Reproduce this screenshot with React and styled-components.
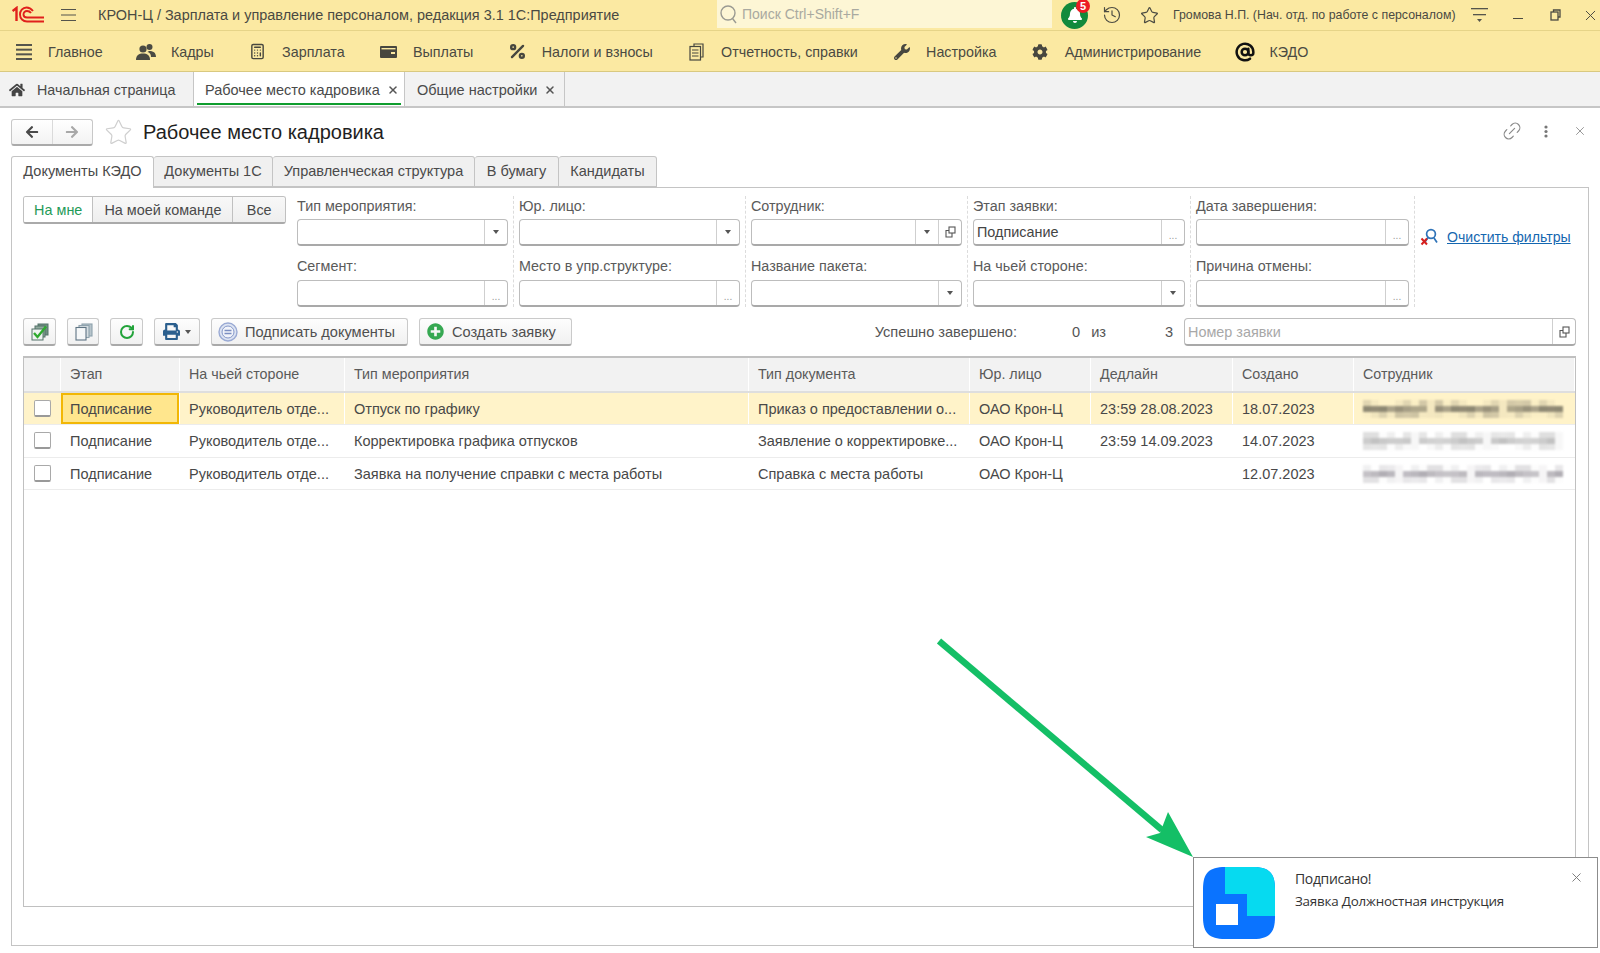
import React from "react";
import styled, { createGlobalStyle } from "styled-components";
import { Calculator, History, Star, Link2, RotateCw, X, AtSign, Percent } from "lucide-react";
import { FaWrench, FaCog, FaBell, FaArrowLeft, FaArrowRight, FaPrint, FaPlusCircle, FaHome } from "react-icons/fa";

const Global = createGlobalStyle`
  html, body { margin: 0; padding: 0; background: #fff; }
  * { box-sizing: border-box; }
  body { font-family: "Liberation Sans", Arial, sans-serif; font-size: 14.4px; color: #444; }
`;

const Screen = styled.div`
  position: relative;
  width: 1600px;
  height: 953px;
  overflow: hidden;
  display: flex;
  flex-direction: column;
  background: #fff;
`;

/* ---------- title bar ---------- */
const TitleBar = styled.header`
  height: 31px;
  flex: none;
  display: flex;
  align-items: center;
  background: #fbe9a2;
  border-bottom: 1px solid #e6d488;
  padding-left: 12px;
  color: #4a4a42;
`;
const Burger = styled.span`
  display: flex;
  margin-left: 16px;
  margin-right: 22px;
`;
const AppTitle = styled.div`
  width: 619px;
  flex: none;
  font-size: 14.45px;
  white-space: nowrap;
`;
const SearchBox = styled.div`
  width: 335px;
  height: 28px;
  flex: none;
  margin-top: -3px;
  display: flex;
  align-items: center;
  gap: 4px;
  padding-left: 2px;
  background: #fdf6d5;
  color: #a9a9a0;
  font-size: 14px;
`;
const BellBadge = styled.div`
  position: relative;
  width: 27px;
  height: 27px;
  flex: none;
  margin-left: 9px;
  border-radius: 50%;
  background: #128a3c;
  color: #fff;
  display: flex;
  align-items: center;
  justify-content: center;
`;
const Badge = styled.span`
  position: absolute;
  top: -3px;
  right: -2px;
  width: 14px;
  height: 14px;
  border-radius: 50%;
  background: #ec1c24;
  color: #fff;
  font-size: 11px;
  font-weight: 700;
  line-height: 14px;
  text-align: center;
`;
const TitleIcon = styled.span`
  display: flex;
  flex: none;
  margin-left: ${(p) => p.$left}px;
  color: #4b4b42;
`;
const UserName = styled.div`
  margin-left: 14px;
  width: 289px;
  flex: none;
  font-size: 12.35px;
  white-space: nowrap;
`;
const MinimizeBar = styled.span`
  display: block;
  width: 10px;
  height: 1.5px;
  margin-top: 7px;
  background: #4b4b42;
`;

/* ---------- section menu ---------- */
const MenuBar = styled.nav`
  height: 41px;
  flex: none;
  display: flex;
  align-items: center;
  gap: 33.3px;
  padding: 1px 0 0 13px;
  background: #fbe9a2;
  border-bottom: 1px solid #d9c980;
`;
const MenuItem = styled.div`
  display: flex;
  align-items: center;
  gap: 14px;
  color: #4a4a42;
  font-size: 14.3px;
  white-space: nowrap;
`;
const MenuIcon = styled.span`
  width: 21px;
  display: flex;
  justify-content: center;
  color: #47473f;
`;

/* ---------- open windows ---------- */
const OpenTabs = styled.div`
  height: 36px;
  flex: none;
  display: flex;
  background: #f2f2f2;
  border-bottom: 2px solid #c6c6c6;
`;
const OpenTab = styled.div`
  position: relative;
  width: ${(p) => p.$width}px;
  display: flex;
  align-items: center;
  gap: ${(p) => p.$gap || 7}px;
  padding: 1px 0 0 ${(p) => p.$pad}px;
  background: ${(p) => (p.$active ? "#fff" : "#f2f2f2")};
  border-right: 1px solid #c6c6c6;
  font-size: ${(p) => p.$size || 14.5}px;
  color: #4a4a4a;
  white-space: nowrap;
  &::after {
    content: "";
    display: ${(p) => (p.$active ? "block" : "none")};
    position: absolute;
    left: 3px;
    right: 3px;
    bottom: 1px;
    height: 2px;
    background: #0f9d2e;
  }
`;

/* ---------- form ---------- */
const Content = styled.main`
  flex: 1;
  min-height: 0;
  display: flex;
  flex-direction: column;
  padding: 0 11px 7px;
`;
const FormHeader = styled.div`
  height: 48px;
  flex: none;
  display: flex;
  align-items: center;
  padding-top: 1px;
`;
const NavGroup = styled.div`
  display: flex;
  width: 82px;
  height: 27px;
  border: 1px solid #c8c8c8;
  border-bottom: 2px solid #aaa;
  border-radius: 3px;
  background: linear-gradient(#fff, #f3f3f3);
`;
const NavButton = styled.span`
  flex: 1;
  display: flex;
  align-items: center;
  justify-content: center;
  color: ${(p) => (p.$muted ? "#a8a8a8" : "#4a4a4a")};
  & + & { border-left: 1px solid #dadada; }
`;
const FavStar = styled.span`
  display: flex;
  margin: 0 10px 0 11px;
  color: #cfcfcf;
`;
const FormTitle = styled.h1`
  flex: 1;
  margin: 0;
  font-size: 20px;
  font-weight: 400;
  color: #1f1f1f;
`;
const HeaderIcons = styled.div`
  display: flex;
  align-items: center;
  gap: 21px;
  color: #8a8a8a;
  padding-right: 2px;
  margin-bottom: 3px;
`;

const PageTabs = styled.div`
  height: 31px;
  flex: none;
  display: flex;
  position: relative;
  z-index: 1;
`;
const PageTab = styled.div`
  width: ${(p) => p.$width}px;
  height: ${(p) => (p.$active ? 32 : 31)}px;
  padding-bottom: ${(p) => (p.$active ? 3 : 2)}px;
  display: flex;
  align-items: center;
  justify-content: center;
  background: ${(p) => (p.$active ? "#fff" : "#f0f0f0")};
  border: 1px solid #c4c4c4;
  border-left-width: ${(p) => (p.$active ? 1 : 0)}px;
  border-bottom-width: ${(p) => (p.$active ? 0 : 1)}px;
  border-radius: 3px 3px 0 0;
  font-size: 14.5px;
  color: #4a4a4a;
  white-space: nowrap;
`;
const Panel = styled.section`
  flex: 1;
  min-height: 0;
  display: flex;
  flex-direction: column;
  border: 1px solid #c4c4c4;
  padding: 8px 12px 38px 11px;
`;

const Filters = styled.div`
  display: flex;
  height: 111px;
  flex: none;
`;
const Segmented = styled.div`
  width: 263px;
  height: 28px;
  flex: none;
  margin-right: 11px;
  display: flex;
  border: 1px solid #c0c0c0;
  border-bottom: 2px solid #aaa;
  border-radius: 3px;
  overflow: hidden;
`;
const Segment = styled.div`
  width: ${(p) => p.$width}px;
  display: flex;
  align-items: center;
  justify-content: center;
  background: ${(p) => (p.$active ? "#fff" : "linear-gradient(#f8f8f8,#eee)")};
  color: ${(p) => (p.$active ? "#1f9a58" : "#4a4a4a")};
  font-size: 14.4px;
  white-space: nowrap;
  & + & { border-left: 1px solid #c0c0c0; }
`;
const FilterColumn = styled.div`
  width: ${(p) => p.$width}px;
  flex: none;
  display: flex;
  flex-direction: column;
  gap: 11px;
  margin-right: 5px;
  padding-right: 5px;
  border-right: 1px dashed #dcdcdc;
  box-sizing: content-box;
`;
const Field = styled.div`
  display: flex;
  flex-direction: column;
`;
const FieldLabel = styled.label`
  height: 23px;
  line-height: ${(p) => (p.$second ? 18 : 20)}px;
  font-size: 14.35px;
  color: #5a5a5a;
  white-space: nowrap;
`;
const Input = styled.div`
  height: 27px;
  display: flex;
  align-items: stretch;
  border: 1px solid #bdbdbd;
  border-bottom: 2px solid #a9a9a9;
  border-radius: 4px;
  background: #fff;
`;
const InputValue = styled.div`
  flex: 1;
  min-width: 0;
  padding-left: 3px;
  display: flex;
  align-items: center;
  font-size: 14.4px;
  color: ${(p) => (p.$placeholder ? "#a8a8a8" : "#444")};
`;
const InputAddon = styled.div`
  width: ${(p) => p.$width || 23}px;
  flex: none;
  display: flex;
  align-items: center;
  justify-content: center;
  border-left: 1px solid #cfcfcf;
  color: #777;
`;
const Caret = styled.span`
  width: 0;
  height: 0;
  border-left: 3px solid transparent;
  border-right: 3px solid transparent;
  border-top: 4px solid #555;
`;
const Dots = styled.span`
  font-size: 10px;
  line-height: 10px;
  color: #999;
  margin-top: 8px;
`;
const ClearFilters = styled.div`
  display: flex;
  align-items: center;
  gap: 8px;
  height: 27px;
  margin-top: 27px;
`;
const ClearLink = styled.a`
  color: #1467b0;
  font-size: 14.1px;
  text-decoration: underline;
  white-space: nowrap;
`;

const Toolbar = styled.div`
  height: 28px;
  margin-top: 11px;
  flex: none;
  display: flex;
  align-items: center;
  gap: 11px;
`;
const ToolButton = styled.div`
  width: ${(p) => p.$width}px;
  height: 28px;
  flex: none;
  display: flex;
  align-items: center;
  justify-content: ${(p) => (p.$pad ? "flex-start" : "center")};
  padding-left: ${(p) => p.$pad || 0}px;
  gap: ${(p) => p.$gap || 6}px;
  border: 1px solid #cacaca;
  border-bottom: 2px solid #a9a9a9;
  border-radius: 3px;
  background: linear-gradient(#fdfdfd, #f1f1f1);
  font-size: 14.6px;
  color: #4f4f4f;
  white-space: nowrap;
`;
const Progress = styled.div`
  margin-left: auto;
  display: flex;
  align-items: center;
  font-size: 14.6px;
  color: #555;
  white-space: nowrap;
`;
const ProgressNumber = styled.span`
  width: ${(p) => p.$width}px;
  text-align: right;
  flex: none;
`;
const NumberInput = styled(Input)`
  width: 392px;
  height: 28px;
  margin-left: 11px;
  flex: none;
`;

const GRID = "37px 119px 165px 404px 221px 121px 142px 121px 1fr";
const Table = styled.div`
  margin-top: 10px;
  flex: 1;
  min-height: 0;
  border: 1px solid #c0c0c0;
  border-top: 2px solid #c0c0c0;
`;
const HeadRow = styled.div`
  display: grid;
  grid-template-columns: ${GRID};
  height: 34.5px;
  background: #f2f2f2;
  border-bottom: 2px solid #dedede;
`;
const HeadCell = styled.div`
  display: flex;
  align-items: center;
  padding-left: 9px;
  border-right: 1px solid #fff;
  font-size: 14.3px;
  color: #5a5a5a;
`;
const Row = styled.div`
  display: grid;
  grid-template-columns: ${GRID};
  height: 32.5px;
  background: ${(p) => (p.$selected ? "#fff3c9" : "#fff")};
  border-bottom: 1px solid #ececec;
`;
const Cell = styled.div`
  display: flex;
  align-items: center;
  padding: 1px 0 0 9px;
  min-width: 0;
  overflow: hidden;
  white-space: nowrap;
  font-size: 14.5px;
  color: #484848;
  border-right: 1px solid ${(p) => (p.$selected ? "#fff" : "transparent")};
  background: ${(p) => (p.$focused ? "#ffe68d" : "transparent")};
  box-shadow: ${(p) => (p.$focused ? "inset 0 0 0 2px #f2b705" : "none")};
`;
const CheckCell = styled.div`
  display: flex;
  align-items: center;
  justify-content: center;
  padding-right: 1px;
`;
const Checkbox = styled.span`
  width: 17px;
  height: 17px;
  border: 1px solid #a9a9a9;
  border-bottom: 2px solid #999;
  border-radius: 2px;
  background: #fff;
`;
const Mosaic = styled.div`
  display: grid;
  grid-template-columns: repeat(25, 8px);
  grid-auto-rows: 6px;
  filter: blur(1px);
`;
const MosaicCell = styled.span``;

/* ---------- notification and arrow ---------- */
const Toast = styled.aside`
  position: absolute;
  left: 1193px;
  top: 857px;
  width: 405px;
  height: 91px;
  display: flex;
  background: #fff;
  border: 1px solid #8c8c8c;
  padding: 9px 0 0 9px;
`;
const ToastBody = styled.div`
  margin-left: 20px;
  padding-top: 2px;
  color: #333;
  font-family: "Open Sans", "Noto Sans", sans-serif;
`;
const ToastTitle = styled.div`
  font-size: 14px;
  line-height: 20px;
  letter-spacing: -0.35px;
`;
const ToastText = styled.div`
  font-size: 13.4px;
  line-height: 18px;
  margin-top: 3px;
  letter-spacing: -0.2px;
`;
const ToastClose = styled.span`
  position: absolute;
  top: 12px;
  right: 13px;
  color: #777;
  display: flex;
`;
const ArrowOverlay = styled.svg`
  position: absolute;
  left: 0;
  top: 0;
  pointer-events: none;
`;

/* ---------- drawings ---------- */
const Logo1C = () => (
  <svg width="33" height="18" viewBox="0 0 33 18" fill="none" stroke="#e0201c" strokeWidth="1.9">
    <path d="M0.5 5 L4.5 2 V15" strokeWidth="2.4" />
    <path d="M21 5 C19 2.5 17 1.5 14.5 1.5 C10.5 1.5 8 5 8 8.5 C8 12.5 11 15.5 15 15.5 H32" />
    <path d="M19 7 C18 5.5 16.5 5 15 5 C13 5 11.5 6.5 11.5 8.5 C11.5 10.5 13 11.5 15 11.5 H32" />
  </svg>
);
const Lines = ({ n = 3, w = 16, h = 13, t = 1, c = "#55554c" }) => (
  <svg width={w} height={h} viewBox={`0 0 ${w} ${h}`}>
    {Array.from({ length: n }).map((_, i) => (
      <rect key={i} x="0" y={(i * (h - t)) / (n - 1)} width={w} height={t} fill={c} />
    ))}
  </svg>
);
const PeopleIcon = () => (
  <svg width="20" height="18" viewBox="0 0 20 18" fill="#4a4a42">
    <circle cx="7" cy="6" r="3.6" />
    <path d="M0 17 C0 12 3 10.5 7 10.5 S14 12 14 17 Z" />
    <circle cx="13.5" cy="4" r="3" />
    <path d="M13 8 C17 8 20 9.5 20 14 H15 C15 11 13.5 9.5 11.5 9 Z" />
  </svg>
);
const WalletIcon = () => (
  <svg width="17" height="12" viewBox="0 0 17 12">
    <rect width="17" height="12" rx="1" fill="#47473f" />
    <rect x="1.5" y="2" width="14" height="1.4" fill="#fbe9a2" />
    <rect x="11" y="6" width="4" height="2" fill="#fbe9a2" />
  </svg>
);
const ReportIcon = () => (
  <svg width="15" height="18" viewBox="0 0 15 18" fill="none" stroke="#47473f" strokeWidth="1.2">
    <path d="M5 3 V1 H14 V14 H12" />
    <rect x="1" y="3.5" width="10.5" height="13.5" />
    <path d="M3 7 H9.5 M3 10 H9.5 M3 13 H9.5" />
  </svg>
);
const SortMenuIcon = () => (
  <svg width="17" height="18" viewBox="0 0 17 18" fill="#55554c">
    <rect y="2" width="17" height="1.3" />
    <rect x="2" y="8" width="13" height="1.3" />
    <path d="M6 13 H11 L8.5 16 Z" />
  </svg>
);
const RestoreIcon = () => (
  <svg width="11" height="12" viewBox="0 0 11 12" fill="none" stroke="#4b4b42" strokeWidth="1.3">
    <path d="M3.5 3 V1 H10 V8 H8" />
    <rect x="1" y="3" width="7" height="8" />
  </svg>
);
const OpenIcon = () => (
  <svg width="11" height="12" viewBox="0 0 11 12" fill="none" stroke="#555" strokeWidth="1.1">
    <rect x="4" y="1" width="6" height="6" />
    <path d="M4 4.5 H1 V11 H7 V7" />
  </svg>
);
const DotsVertical = () => (
  <svg width="4" height="13" viewBox="0 0 4 13" fill="#777">
    <circle cx="2" cy="2" r="1.6" />
    <circle cx="2" cy="6.5" r="1.6" />
    <circle cx="2" cy="11" r="1.6" />
  </svg>
);
const ClearIcon = () => (
  <svg width="19" height="18" viewBox="0 0 19 18" fill="none">
    <circle cx="11" cy="6" r="4.4" stroke="#2f73b8" strokeWidth="1.7" />
    <path d="M8 9.5 L5 14 M14 10 L17 14.5" stroke="#2f73b8" strokeWidth="1.7" />
    <path d="M1.5 10.5 L7 16.5 M7 10.5 L1.5 16.5" stroke="#d6201f" strokeWidth="2" />
  </svg>
);
const CheckStackIcon = () => (
  <svg width="20" height="18" viewBox="0 0 20 18" fill="none">
    <rect x="8" y="1" width="10" height="11" fill="#6f8f80" stroke="#54736a" />
    <rect x="5" y="3" width="10" height="11" fill="#8fa89c" stroke="#54736a" />
    <rect x="2" y="6" width="11" height="11" fill="#eef3f0" stroke="#54736a" />
    <path d="M4 10 L7.5 14 L16 3.5" stroke="#2eaa2e" strokeWidth="2.4" />
  </svg>
);
const StackIcon = () => (
  <svg width="19" height="18" viewBox="0 0 19 18" fill="#f5f7f8" stroke="#8fa2ad" strokeWidth="1.1">
    <rect x="8" y="1" width="10" height="12" fill="#b7c4cb" />
    <rect x="5" y="2.5" width="10" height="12" fill="#d6dee2" />
    <rect x="2" y="4.5" width="10" height="12.5" stroke="#5e7483" />
  </svg>
);
const SignIcon = () => (
  <svg width="20" height="20" viewBox="0 0 20 20" fill="none">
    <circle cx="10" cy="10" r="9" fill="#dde4f2" stroke="#9aaad4" strokeWidth="1.4" />
    <circle cx="10" cy="10" r="6" fill="#f2f4fa" stroke="#8497c9" />
    <path d="M6.5 8.5 H13.5 M6.5 11.5 H13.5" stroke="#7c8fc2" strokeWidth="1.3" />
  </svg>
);
const AppGlyph = () => (
  <svg width="72" height="72" viewBox="0 0 72 72">
    <path d="M22 0 H50 C66 0 72 6 72 22 V50 C72 66 66 72 50 72 H22 C6 72 0 66 0 50 V22 C0 6 6 0 22 0 Z" fill="#0a73ff" />
    <path d="M22 0 H50 C66 0 72 6 72 22 V49 H44 V27 H22 Z" fill="#06daf0" />
    <rect x="13" y="37" width="22" height="21" fill="#fff" />
  </svg>
);

/* ---------- data ---------- */
const menu = [
  [<Lines n={4} w={16} h={16} t={2} />, "Главное"],
  [<PeopleIcon />, "Кадры"],
  [<Calculator size={17} strokeWidth={2} />, "Зарплата"],
  [<WalletIcon />, "Выплаты"],
  [<Percent size={19} strokeWidth={3} />, "Налоги и взносы"],
  [<ReportIcon />, "Отчетность, справки"],
  [<FaWrench size={16} />, "Настройка"],
  [<FaCog size={16} />, "Администрирование"],
  [<AtSign size={20} strokeWidth={3} color="#111" />, "КЭДО"],
];
const filterColumns = [
  [211, { label: "Тип мероприятия:", kind: "select" }, { label: "Сегмент:", kind: "dots" }],
  [221, { label: "Юр. лицо:", kind: "select" }, { label: "Место в упр.структуре:", kind: "dots" }],
  [211, { label: "Сотрудник:", kind: "selectOpen" }, { label: "Название пакета:", kind: "select" }],
  [212, { label: "Этап заявки:", kind: "dots", value: "Подписание" }, { label: "На чьей стороне:", kind: "select" }],
  [213, { label: "Дата завершения:", kind: "dots" }, { label: "Причина отмены:", kind: "dots" }],
];
const columns = ["", "Этап", "На чьей стороне", "Тип мероприятия", "Тип документа", "Юр. лицо", "Дедлайн", "Создано", "Сотрудник"];
const rows = [
  ["Подписание", "Руководитель отде...", "Отпуск по графику", "Приказ о предоставлении о...", "ОАО Крон-Ц", "23:59 28.08.2023", "18.07.2023"],
  ["Подписание", "Руководитель отде...", "Корректировка графика отпусков", "Заявление о корректировке...", "ОАО Крон-Ц", "23:59 14.09.2023", "14.07.2023"],
  ["Подписание", "Руководитель отде...", "Заявка на получение справки с места работы", "Справка с места работы", "ОАО Крон-Ц", "", "12.07.2023"],
];
const mosaicTone = [
  { base: [110, 105, 90], band: 0.8, side: 0.34, seed: 3 },
  { base: [150, 150, 150], band: 0.6, side: 0.3, seed: 5 },
  { base: [135, 130, 140], band: 0.65, side: 0.24, seed: 8 },
];

const Blurred = ({ row }) => {
  const tone = mosaicTone[row];
  const cells = [];
  for (let y = 0; y < 3; y++) {
    for (let x = 0; x < 25; x++) {
      const n = ((x + 1) * (y + 2) * tone.seed + x * x) % 11;
      const gap = (x + row * 2) % 9 === 8;
      const a = gap
        ? 0.08
        : y === 1
          ? tone.band * (0.7 + n * 0.03)
          : tone.side * (n / 10);
      cells.push(
        <MosaicCell
          key={`${x}-${y}`}
          style={{ background: `rgba(${tone.base[0]},${tone.base[1]},${tone.base[2]},${a})` }}
        />
      );
    }
  }
  return <Mosaic>{cells}</Mosaic>;
};

const FilterField = ({ label, kind, value, second }) => (
  <Field>
    <FieldLabel $second={second}>{label}</FieldLabel>
    <Input>
      <InputValue>{value}</InputValue>
      {kind === "selectOpen" ? (
        <>
          <InputAddon><Caret /></InputAddon>
          <InputAddon><OpenIcon /></InputAddon>
        </>
      ) : (
        <InputAddon>{kind === "dots" ? <Dots>...</Dots> : <Caret />}</InputAddon>
      )}
    </Input>
  </Field>
);

export default function App() {
  return (
    <Screen>
      <Global />
      <TitleBar>
        <Logo1C />
        <Burger><Lines n={3} w={15} h={12} /></Burger>
        <AppTitle>КРОН-Ц / Зарплата и управление персоналом, редакция 3.1 1С:Предприятие</AppTitle>
        <SearchBox>
          <svg width="19" height="20" viewBox="0 0 19 20" fill="none" stroke="#9a9a92" strokeWidth="1.4">
            <circle cx="9" cy="9" r="7" />
            <path d="M13.5 14.5 L17 19" />
          </svg>
          Поиск Ctrl+Shift+F
        </SearchBox>
        <BellBadge>
          <FaBell size={16} />
          <Badge>5</Badge>
        </BellBadge>
        <TitleIcon $left={14}><History size={20} strokeWidth={1.4} /></TitleIcon>
        <TitleIcon $left={18}><Star size={19} strokeWidth={1.5} /></TitleIcon>
        <UserName>Громова Н.П. (Нач. отд. по работе с персоналом)</UserName>
        <TitleIcon $left={9}><SortMenuIcon /></TitleIcon>
        <TitleIcon $left={25}><MinimizeBar /></TitleIcon>
        <TitleIcon $left={27}><RestoreIcon /></TitleIcon>
        <TitleIcon $left={21}><X size={17} strokeWidth={1.4} /></TitleIcon>
      </TitleBar>

      <MenuBar>
        {menu.map(([icon, text]) => (
          <MenuItem key={text}>
            <MenuIcon>{icon}</MenuIcon>
            {text}
          </MenuItem>
        ))}
      </MenuBar>

      <OpenTabs>
        <OpenTab $width={194} $pad={9} $gap={12} $size={14.3}>
          <FaHome size={16} color="#444" />
          Начальная страница
        </OpenTab>
        <OpenTab $width={211} $pad={11} $active>
          Рабочее место кадровика
          <X size={12} strokeWidth={3} color="#555" />
        </OpenTab>
        <OpenTab $width={160} $pad={12}>
          Общие настройки
          <X size={12} strokeWidth={3} color="#555" />
        </OpenTab>
      </OpenTabs>

      <Content>
        <FormHeader>
          <NavGroup>
            <NavButton><FaArrowLeft size={14} /></NavButton>
            <NavButton $muted><FaArrowRight size={14} /></NavButton>
          </NavGroup>
          <FavStar><Star size={29} strokeWidth={1} /></FavStar>
          <FormTitle>Рабочее место кадровика</FormTitle>
          <HeaderIcons>
            <Link2 size={22} strokeWidth={1.3} style={{ transform: "rotate(-45deg)" }} />
            <DotsVertical />
            <X size={14} strokeWidth={1.5} style={{ marginLeft: 4 }} />
          </HeaderIcons>
        </FormHeader>

        <PageTabs>
          <PageTab $width={143} $active>Документы КЭДО</PageTab>
          <PageTab $width={119}>Документы 1С</PageTab>
          <PageTab $width={202}>Управленческая структура</PageTab>
          <PageTab $width={84}>В бумагу</PageTab>
          <PageTab $width={98}>Кандидаты</PageTab>
        </PageTabs>

        <Panel>
          <Filters>
            <Segmented>
              <Segment $width={69} $active>На мне</Segment>
              <Segment $width={141}>На моей команде</Segment>
              <Segment $width={53}>Все</Segment>
            </Segmented>
            {filterColumns.map(([width, first, second]) => (
              <FilterColumn key={first.label} $width={width}>
                <FilterField {...first} />
                <FilterField {...second} second />
              </FilterColumn>
            ))}
            <ClearFilters>
              <ClearIcon />
              <ClearLink>Очистить фильтры</ClearLink>
            </ClearFilters>
          </Filters>

          <Toolbar>
            <ToolButton $width={33}><CheckStackIcon /></ToolButton>
            <ToolButton $width={32}><StackIcon /></ToolButton>
            <ToolButton $width={33}><RotateCw size={16} strokeWidth={3} color="#22a33a" /></ToolButton>
            <ToolButton $width={46} $gap={5}><FaPrint size={17} color="#2b5f8e" /><Caret /></ToolButton>
            <ToolButton $width={197} $gap={7} $pad={6}><SignIcon />Подписать документы</ToolButton>
            <ToolButton $width={153} $gap={8} $pad={7}><FaPlusCircle size={17} color="#36a852" />Создать заявку</ToolButton>
            <Progress>
              Успешно завершено:
              <ProgressNumber $width={63}>0</ProgressNumber>
              <ProgressNumber $width={26}>из</ProgressNumber>
              <ProgressNumber $width={67}>3</ProgressNumber>
              <NumberInput>
                <InputValue $placeholder>Номер заявки</InputValue>
                <InputAddon><OpenIcon /></InputAddon>
              </NumberInput>
            </Progress>
          </Toolbar>

          <Table>
            <HeadRow>
              {columns.map((name) => <HeadCell key={name}>{name}</HeadCell>)}
            </HeadRow>
            {rows.map((cells, r) => (
              <Row key={cells[3]} $selected={r === 0}>
                <CheckCell><Checkbox /></CheckCell>
                {cells.map((text, c) => (
                  <Cell key={c} $focused={r === 0 && c === 0} $selected={r === 0}>{text}</Cell>
                ))}
                <Cell><Blurred row={r} /></Cell>
              </Row>
            ))}
          </Table>
        </Panel>
      </Content>

      <ArrowOverlay width="1600" height="953" viewBox="0 0 1600 953">
        <path d="M939 641 L1162 830" stroke="#14bf66" strokeWidth="6.5" fill="none" />
        <path d="M1193 857 L1168 812 L1160 833 L1146 837 Z" fill="#14bf66" />
      </ArrowOverlay>

      <Toast>
        <AppGlyph />
        <ToastBody>
          <ToastTitle>Подписано!</ToastTitle>
          <ToastText>Заявка Должностная инструкция</ToastText>
        </ToastBody>
        <ToastClose><X size={15} strokeWidth={1.5} /></ToastClose>
      </Toast>
    </Screen>
  );
}
